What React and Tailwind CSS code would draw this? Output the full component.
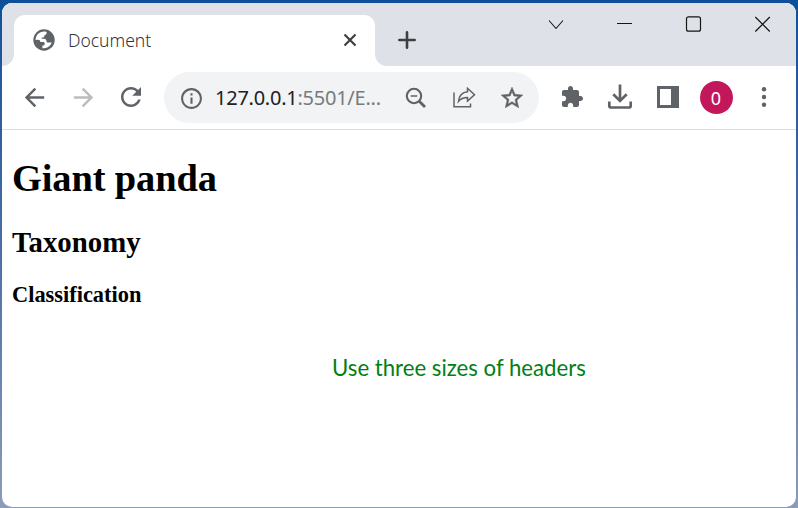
const ui = "font-['Noto_Sans','Open_Sans',sans-serif]";

function Icon({ d, className = '', size = 29 }) {
  return (
    <svg width={size} height={size} viewBox="0 0 24 24" fill="currentColor" className={`block shrink-0 ${className}`}>
      <path d={d} />
    </svg>
  );
}

function Cell({ children, className = '' }) {
  return <div className={`flex h-full w-12 shrink-0 items-center justify-center text-[#5f6368] ${className}`}>{children}</div>;
}

function TabStrip() {
  return (
    <div className="flex h-[63px] shrink-0 bg-white">
      <div className="w-3 rounded-br-[12px] bg-[#dee1e8]" />
      <div className="w-[361px] bg-[#dee1e8] pt-3">
        <div className="flex h-full items-center rounded-t-[11px] bg-white pb-px pl-[19px] pr-[13px]">
          <svg width="22" height="22" viewBox="0 0 22 22" className="block shrink-0">
            <circle cx="11" cy="11" r="10.700" fill="#5f6368" />
            <path fill="#fff" d="M2.600 11C2.600 6.600 6.200 2.600 11 2.600c.9 0 1.800.1 2.600.4.200 1.700-.5 2.900-2.100 3.300l-.2 1.300c-.2.700-.9.9-1.800.9-.7 0-.9.5-.7 1.300h2.400c1.500 0 2.200 1 2.300 2.300.1 1 .6 1.500 1.500 1.500h3.700c-1.100 3.300-4.100 5.700-7.700 5.700-.6 0-1.100 0-1.600-.1v-2.600c1.500 0 2.300-.6 2.300-1.900 0-1.100-.6-1.700-1.800-1.700H7.300c0-1.500-.8-2.200-2.200-2.200z" />
          </svg>
          <span className={`${ui} ml-[13px] text-[17.500px] font-light leading-6 text-[#303438]`}>Document</span>
          <svg width="24" height="24" viewBox="0 0 24 24" className="ml-auto block" fill="none" stroke="#3c4043" strokeWidth="2.200">
            <path d="M6.500 6.500l11 11M17.500 6.500l-11 11" />
          </svg>
        </div>
      </div>
      <div className="flex flex-1 rounded-bl-[12px] bg-[#dee1e8]">
        <svg width="20" height="20" viewBox="0 0 20 20" className="ml-[22px] mt-[27px] block" fill="none" stroke="#3c4043" strokeWidth="2.600" strokeLinecap="round">
          <path d="M10 2.300v15.400M2.300 10h15.400" />
        </svg>
        <div className="ml-auto mt-[13px] flex h-4 w-[275px] text-[#151515]">
          <svg width="69" height="16" viewBox="0 0 69 16" fill="none" stroke="currentColor" strokeWidth="1.100">
            <path d="M28 4.500l7 8 7-8" />
          </svg>
          <svg width="69" height="16" viewBox="0 0 69 16" fill="none" stroke="currentColor" strokeWidth="1.200">
            <path d="M27 7.500h15" />
          </svg>
          <svg width="69" height="16" viewBox="0 0 69 16" fill="none" stroke="currentColor" strokeWidth="1.200">
            <rect x="27.500" y=".8" width="14" height="14.400" rx="2" />
          </svg>
          <svg width="68" height="16" viewBox="0 0 68 16" fill="none" stroke="currentColor" strokeWidth="1.200">
            <path d="M27.300 1l14.500 14.500M41.800 1L27.300 15.500" />
          </svg>
        </div>
      </div>
    </div>
  );
}

function Toolbar() {
  return (
    <div className="flex h-16 shrink-0 items-center border-b border-[#dadce0] bg-white pl-[9px]">
      <Cell>
        <Icon className="-ml-0.5 -mt-px" d="M20 11H7.830l5.590-5.590L12 4l-8 8 8 8 1.410-1.410L7.830 13H20v-2z" />
      </Cell>
      <Cell>
        <Icon className="-mt-px text-[#babcbe]" d="M12 4l-1.410 1.410L16.170 11H4v2h12.170l-5.580 5.590L12 20l8-8z" />
      </Cell>
      <Cell>
        <Icon className="-mt-px" d="M17.650 6.350C16.200 4.900 14.210 4 12 4c-4.420 0-7.990 3.580-7.990 8s3.570 8 7.990 8c3.730 0 6.840-2.550 7.730-6h-2.080c-.82 2.330-3.040 4-5.650 4-3.310 0-6-2.690-6-6s2.690-6 6-6c1.660 0 3.140.69 4.220 1.780L13 11h7V4l-2.350 2.350z" size={30} />
      </Cell>
      <div className="ml-[9px] flex h-[51px] w-[375px] shrink-0 items-center rounded-full bg-[#f1f3f4] pl-[15px] pr-[3px] text-[#5f6368]">
        <Icon size={25} className="mt-0.5" d="M11 7h2v2h-2zm0 4h2v6h-2zm1-9C6.480 2 2 6.480 2 12s4.480 10 10 10 10-4.480 10-10S17.520 2 12 2zm0 18c-4.410 0-8-3.590-8-8s3.590-8 8-8 8 3.590 8 8-3.590 8-8 8z" />
        <span className={`${ui} ml-[11px] whitespace-nowrap text-[20px] leading-7 tracking-[-0.25px] text-[#777b7f]`}>
          <span className="text-[#202124]">127.0.0.1</span>:5501/E...
        </span>
        <div className="ml-auto flex">
          <Cell>
            <svg width="24" height="24" viewBox="0 0 24 24" className="mt-0.5" fill="none" stroke="currentColor">
              <circle cx="10" cy="9" r="7.200" strokeWidth="2.100" />
              <path d="M15 14l6 6" strokeWidth="2.900" />
              <path d="M6.700 9h6.600" strokeWidth="1.700" />
            </svg>
          </Cell>
          <Cell>
            <svg width="24" height="24" viewBox="0 0 24 24" className="mt-0.5" fill="none" stroke="currentColor" strokeWidth="1.500">
              <path d="M2 5.500v14.300h16.500v-3.300" />
              <path d="M15.500 1.300l7 6.500-7 6.300v-3.600c-4 0-6.600.9-9 3.900.5-5.500 3.500-9 9-9.600z" />
            </svg>
          </Cell>
          <Cell>
            <svg width="26" height="26" viewBox="0 0 24 24" fill="currentColor" stroke="currentColor" strokeWidth=".45">
              <path d="M22 9.240l-7.190-.62L12 2 9.190 8.630 2 9.240l5.460 4.730L5.820 21 12 17.270 18.180 21l-1.630-7.030L22 9.240zM12 15.400l-3.760 2.270 1-4.280-3.320-2.880 4.380-.38L12 6.100l1.710 4.040 4.380.38-3.320 2.880 1 4.280L12 15.400z" />
            </svg>
          </Cell>
        </div>
      </div>
      <Cell className="ml-[9px]">
        <Icon size={24} className="-mt-px" d="M20.500 11H19V7c0-1.100-.9-2-2-2h-4V3.500C13 2.120 11.880 1 10.500 1S8 2.120 8 3.500V5H4c-1.100 0-1.990.9-1.990 2v3.800H3.500c1.490 0 2.700 1.210 2.700 2.700s-1.210 2.700-2.700 2.700H2V20c0 1.100.9 2 2 2h3.800v-1.500c0-1.490 1.210-2.700 2.700-2.700 1.490 0 2.700 1.210 2.700 2.700V22H17c1.100 0 2-.9 2-2v-4h1.500c1.380 0 2.500-1.120 2.500-2.500S21.880 11 20.500 11z" />
      </Cell>
      <Cell>
        <svg width="26" height="26" viewBox="0 0 26 26" className="-mt-px" fill="none" stroke="currentColor" strokeWidth="2.700">
          <path d="M13 .5v15.500M6.300 10.200l6.700 6.700 6.700-6.700" />
          <path d="M2.300 17.500v4.200q0 1.800 1.800 1.800h17.800q1.800 0 1.800-1.800v-4.200" />
        </svg>
      </Cell>
      <Cell>
        <svg width="22" height="22" viewBox="0 0 22 22" className="-mt-px" fill="currentColor">
          <path fillRule="evenodd" d="M0 0h22v22H0zM3 3v16h11V3z" />
        </svg>
      </Cell>
      <Cell>
        <div className={`${ui} flex h-[33px] w-[33px] items-center justify-center rounded-full bg-[#c2185b] text-[18px] leading-none text-white`}>0</div>
      </Cell>
      <Cell>
        <svg width="6" height="20" viewBox="0 0 6 20" className="-mt-px" fill="currentColor">
          <circle cx="3" cy="2.300" r="2.200" />
          <circle cx="3" cy="10" r="2.200" />
          <circle cx="3" cy="17.700" r="2.200" />
        </svg>
      </Cell>
    </div>
  );
}

export default function App() {
  return (
    <div className="h-[508px] w-[798px] overflow-hidden bg-linear-to-b from-[#0c4f98] via-[#4c70a5] to-[#8b9cb9] px-0.5 pb-px pt-[3px]">
      <div className="flex h-full flex-col overflow-hidden rounded-[10px] bg-white">
        <TabStrip />
        <Toolbar />
        <main className="flex flex-1 flex-col pl-2.5 font-['Liberation_Serif',serif] font-bold text-black">
          <h1 className="mt-[26px] text-[38.400px] leading-[44px] tracking-[-0.1px]">Giant panda</h1>
          <h2 className="mt-[25px] text-[28.800px] leading-[34px]">Taxonomy</h2>
          <h3 className="mt-[23px] text-[22.400px] leading-[26px]">Classification</h3>
          <p className="ml-[320px] mt-11 font-['Lato',sans-serif] text-[22.200px] font-normal leading-8 text-[#008014]">Use three sizes of headers</p>
        </main>
      </div>
    </div>
  );
}
